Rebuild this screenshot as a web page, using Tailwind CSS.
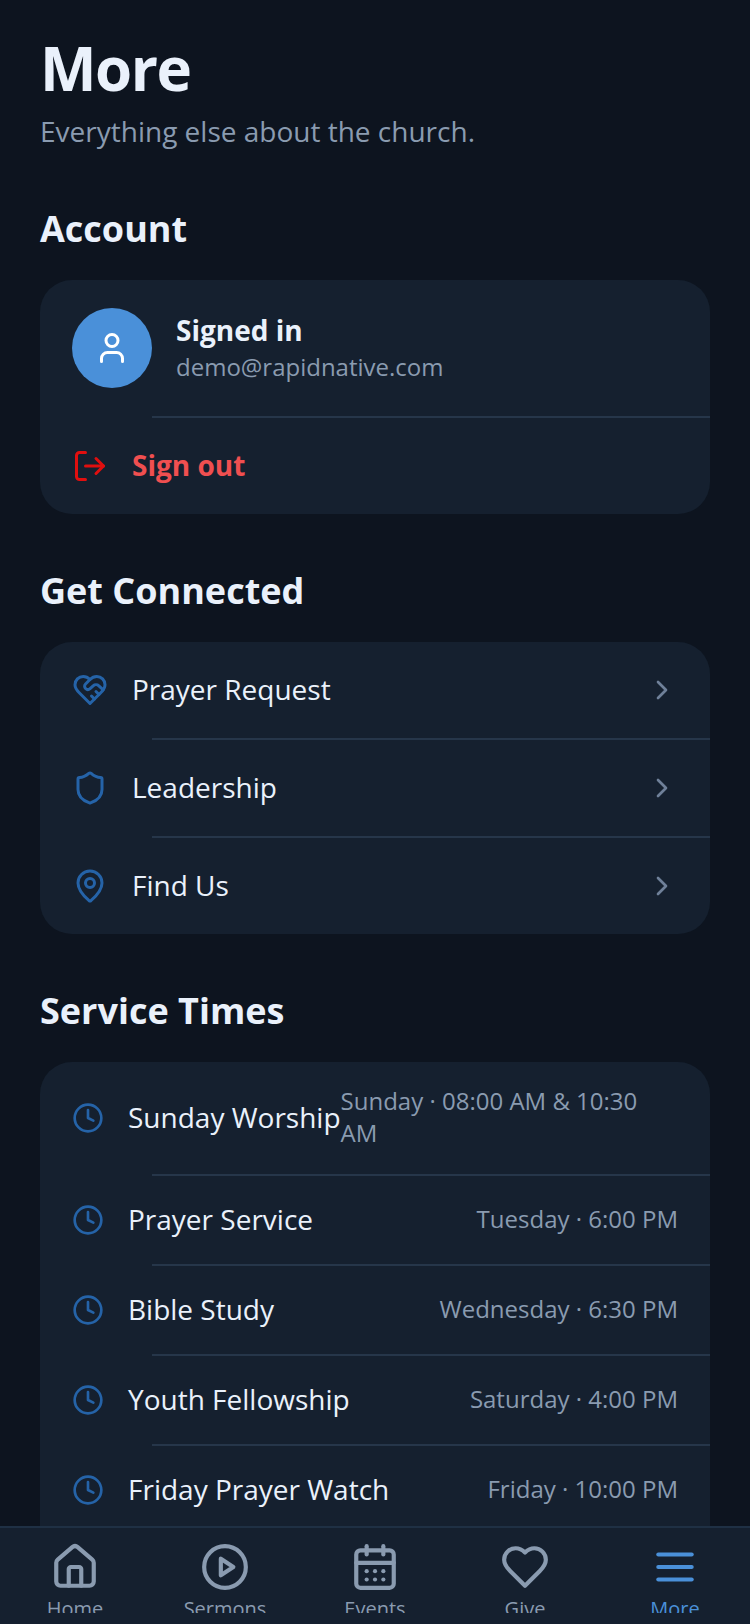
<!DOCTYPE html>
<html lang="en">
<head>
  <meta charset="UTF-8">
  <meta name="viewport" content="width=device-width, initial-scale=1">
  <title>More</title>
  <script src="https://cdn.jsdelivr.net/npm/@tailwindcss/browser@4"></script>
</head>
<body class="bg-[#0d141f] font-['Open_Sans',sans-serif]">
<div class="relative h-[1624px] w-[750px] overflow-hidden">

  <!-- Header -->
  <div class="px-10 pt-[26px]">
    <h1 class="text-[60px] leading-[84px] font-bold tracking-[-1.5px] text-[#eaf1fb]">More</h1>
    <p class="mt-[2px] text-[28px] leading-[38px] text-[#8a9bb0]">Everything else about the church.</p>
  </div>

  <!-- Account -->
  <section class="px-10 mt-[55px]">
    <h2 class="text-[36px] leading-[48px] font-bold text-[#eaf1fb] mb-[27px]">Account</h2>
    <div class="bg-[#15202f] rounded-[32px] overflow-hidden">
      <div class="flex items-center gap-6 px-8 pt-7 pb-7">
        <div class="w-20 h-20 rounded-full bg-[#4a90d9] flex items-center justify-center">
          <svg class="w-9 h-9" viewBox="0 0 24 24" fill="none" stroke="#fff" stroke-width="2" stroke-linecap="round" stroke-linejoin="round"><path d="M19 21v-2a4 4 0 0 0-4-4H9a4 4 0 0 0-4 4v2"/><circle cx="12" cy="7" r="4"/></svg>
        </div>
        <div>
          <div class="text-[28px] leading-[36px] font-bold text-[#eaf1fb]">Signed in</div>
          <div class="text-[24px] leading-[35px] pt-px text-[#8a9bb0]">demo@rapidnative.com</div>
        </div>
      </div>
      <div class="ml-[112px] h-0.5 bg-[#26364a]"></div>
      <div class="flex items-center gap-6 px-8 h-[96px]">
        <svg class="w-9 h-9" viewBox="0 0 24 24" fill="none" stroke="#e00f0f" stroke-width="2" stroke-linecap="round" stroke-linejoin="round"><path d="M9 21H5a2 2 0 0 1-2-2V5a2 2 0 0 1 2-2h4"/><path d="M16 17l5-5-5-5"/><path d="M21 12H9"/></svg>
        <span class="pb-0.5 text-[28px] font-bold text-[#f04f50]">Sign out</span>
      </div>
    </div>
  </section>

  <!-- Get Connected -->
  <section class="px-10 mt-[53px]">
    <h2 class="text-[36px] leading-[48px] font-bold text-[#eaf1fb] mb-[27px]">Get Connected</h2>
    <div class="bg-[#15202f] rounded-[32px] overflow-hidden">
      <div class="flex items-center gap-6 px-8 h-[96px]">
        <svg class="w-9 h-9" viewBox="0 0 24 24" fill="none" stroke="#2563a8" stroke-width="2" stroke-linecap="round" stroke-linejoin="round"><path d="M19 14c1.49-1.46 3-3.21 3-5.5A5.5 5.5 0 0 0 16.5 3c-1.76 0-3 .5-4.5 2-1.5-1.5-2.74-2-4.5-2A5.5 5.5 0 0 0 2 8.5c0 2.3 1.5 4.05 3 5.5l7 7Z"/><path d="M12 5 9.04 7.96a2.17 2.17 0 0 0 0 3.08c.82.82 2.13.85 3 .07l2.07-1.9a2.82 2.82 0 0 1 3.79 0l2.96 2.66"/><path d="m18 15-2-2"/><path d="m15 18-2-2"/></svg>
        <span class="flex-1 pb-0.5 text-[28px] text-[#eaf1fb]">Prayer Request</span>
        <svg class="w-8 h-8" viewBox="0 0 24 24" fill="none" stroke="#6f8099" stroke-width="2" stroke-linecap="round" stroke-linejoin="round"><path d="m9 18 6-6-6-6"/></svg>
      </div>
      <div class="ml-[112px] h-0.5 bg-[#26364a]"></div>
      <div class="flex items-center gap-6 px-8 h-[96px]">
        <svg class="w-9 h-9" viewBox="0 0 24 24" fill="none" stroke="#2563a8" stroke-width="2" stroke-linecap="round" stroke-linejoin="round"><path d="M20 13c0 5-3.5 7.5-7.66 8.95a1 1 0 0 1-.67-.01C7.5 20.5 4 18 4 13V6a1 1 0 0 1 1-1c2 0 4.5-1.2 6.24-2.72a1.17 1.17 0 0 1 1.52 0C14.51 3.81 17 5 19 5a1 1 0 0 1 1 1z"/></svg>
        <span class="flex-1 pb-0.5 text-[28px] text-[#eaf1fb]">Leadership</span>
        <svg class="w-8 h-8" viewBox="0 0 24 24" fill="none" stroke="#6f8099" stroke-width="2" stroke-linecap="round" stroke-linejoin="round"><path d="m9 18 6-6-6-6"/></svg>
      </div>
      <div class="ml-[112px] h-0.5 bg-[#26364a]"></div>
      <div class="flex items-center gap-6 px-8 h-[96px]">
        <svg class="w-9 h-9" viewBox="0 0 24 24" fill="none" stroke="#2563a8" stroke-width="2" stroke-linecap="round" stroke-linejoin="round"><path d="M20 10c0 4.99-5.54 10.19-7.4 11.8a1 1 0 0 1-1.2 0C9.54 20.19 4 14.99 4 10a8 8 0 0 1 16 0"/><circle cx="12" cy="10" r="3"/></svg>
        <span class="flex-1 pb-0.5 text-[28px] text-[#eaf1fb]">Find Us</span>
        <svg class="w-8 h-8" viewBox="0 0 24 24" fill="none" stroke="#6f8099" stroke-width="2" stroke-linecap="round" stroke-linejoin="round"><path d="m9 18 6-6-6-6"/></svg>
      </div>
    </div>
  </section>

  <!-- Service Times -->
  <section class="px-10 mt-[53px]">
    <h2 class="text-[36px] leading-[48px] font-bold text-[#eaf1fb] mb-[27px]">Service Times</h2>
    <!-- card runs on under the tab bar -->
    <div class="bg-[#15202f] rounded-[32px] overflow-hidden pb-10">
      <div class="flex items-center px-8 h-[112px]">
        <svg class="w-8 h-8 mr-6 shrink-0" viewBox="0 0 24 24" fill="none" stroke="#2563a8" stroke-width="2" stroke-linecap="round" stroke-linejoin="round"><circle cx="12" cy="12" r="10"/><path d="M12 6v6l4 2"/></svg>
        <span class="shrink-0 pb-0.5 text-[28px] text-[#eaf1fb]">Sunday Worship</span>
        <span class="flex-1 pb-0.5 text-[24px] leading-[32px] text-[#8a9bb0]">Sunday · 08:00 AM &amp; 10:30 AM</span>
      </div>
      <div class="ml-[112px] h-0.5 bg-[#26364a]"></div>
      <div class="flex items-center justify-between px-8 h-[88px]">
        <div class="flex items-center gap-6">
          <svg class="w-8 h-8" viewBox="0 0 24 24" fill="none" stroke="#2563a8" stroke-width="2" stroke-linecap="round" stroke-linejoin="round"><circle cx="12" cy="12" r="10"/><path d="M12 6v6l4 2"/></svg>
          <span class="pb-0.5 text-[28px] text-[#eaf1fb]">Prayer Service</span>
        </div>
        <span class="pb-0.5 text-[24px] text-[#8a9bb0]">Tuesday · 6:00 PM</span>
      </div>
      <div class="ml-[112px] h-0.5 bg-[#26364a]"></div>
      <div class="flex items-center justify-between px-8 h-[88px]">
        <div class="flex items-center gap-6">
          <svg class="w-8 h-8" viewBox="0 0 24 24" fill="none" stroke="#2563a8" stroke-width="2" stroke-linecap="round" stroke-linejoin="round"><circle cx="12" cy="12" r="10"/><path d="M12 6v6l4 2"/></svg>
          <span class="pb-0.5 text-[28px] text-[#eaf1fb]">Bible Study</span>
        </div>
        <span class="pb-0.5 text-[24px] text-[#8a9bb0]">Wednesday · 6:30 PM</span>
      </div>
      <div class="ml-[112px] h-0.5 bg-[#26364a]"></div>
      <div class="flex items-center justify-between px-8 h-[88px]">
        <div class="flex items-center gap-6">
          <svg class="w-8 h-8" viewBox="0 0 24 24" fill="none" stroke="#2563a8" stroke-width="2" stroke-linecap="round" stroke-linejoin="round"><circle cx="12" cy="12" r="10"/><path d="M12 6v6l4 2"/></svg>
          <span class="pb-0.5 text-[28px] text-[#eaf1fb]">Youth Fellowship</span>
        </div>
        <span class="pb-0.5 text-[24px] text-[#8a9bb0]">Saturday · 4:00 PM</span>
      </div>
      <div class="ml-[112px] h-0.5 bg-[#26364a]"></div>
      <div class="flex items-center justify-between px-8 h-[88px]">
        <div class="flex items-center gap-6">
          <svg class="w-8 h-8" viewBox="0 0 24 24" fill="none" stroke="#2563a8" stroke-width="2" stroke-linecap="round" stroke-linejoin="round"><circle cx="12" cy="12" r="10"/><path d="M12 6v6l4 2"/></svg>
          <span class="pb-0.5 text-[28px] text-[#eaf1fb]">Friday Prayer Watch</span>
        </div>
        <span class="pb-0.5 text-[24px] text-[#8a9bb0]">Friday · 10:00 PM</span>
      </div>
    </div>
  </section>

  <!-- Tab bar: labels are cut off by the item height, same as the screenshot -->
  <nav class="absolute bottom-0 left-0 right-0 h-[98px] bg-[#15202f] border-t-2 border-[#1f3044] flex">
    <div class="w-[150px] h-[85px] overflow-hidden flex flex-col items-center pt-[14px]">
      <svg class="w-[50px] h-[50px] shrink-0" viewBox="0 0 24 24" fill="none" stroke="#8a9bb0" stroke-width="2" stroke-linecap="round" stroke-linejoin="round"><path d="M15 21v-8a1 1 0 0 0-1-1h-4a1 1 0 0 0-1 1v8"/><path d="M3 10a2 2 0 0 1 .709-1.528l7-5.999a2 2 0 0 1 2.582 0l7 5.999A2 2 0 0 1 21 10v9a2 2 0 0 1-2 2H5a2 2 0 0 1-2-2z"/></svg>
      <span class="text-[20px] leading-[28px] text-[#8a9bb0] mt-[3px]">Home</span>
    </div>
    <div class="w-[150px] h-[85px] overflow-hidden flex flex-col items-center pt-[14px]">
      <svg class="w-[50px] h-[50px] shrink-0" viewBox="0 0 24 24" fill="none" stroke="#8a9bb0" stroke-width="2" stroke-linecap="round" stroke-linejoin="round"><circle cx="12" cy="12" r="10"/><path d="m10 8 6 4-6 4z"/></svg>
      <span class="text-[20px] leading-[28px] text-[#8a9bb0] mt-[3px]">Sermons</span>
    </div>
    <div class="w-[150px] h-[85px] overflow-hidden flex flex-col items-center pt-[14px]">
      <svg class="w-[50px] h-[50px] shrink-0" viewBox="0 0 24 24" fill="none" stroke="#8a9bb0" stroke-width="2" stroke-linecap="round" stroke-linejoin="round"><path d="M8 2v4"/><path d="M16 2v4"/><rect x="3" y="4" width="18" height="18" rx="2"/><path d="M3 10h18"/><path d="M8 14h.01"/><path d="M12 14h.01"/><path d="M16 14h.01"/><path d="M8 18h.01"/><path d="M12 18h.01"/><path d="M16 18h.01"/></svg>
      <span class="text-[20px] leading-[28px] text-[#8a9bb0] mt-[3px]">Events</span>
    </div>
    <div class="w-[150px] h-[85px] overflow-hidden flex flex-col items-center pt-[14px]">
      <svg class="w-[50px] h-[50px] shrink-0" viewBox="0 0 24 24" fill="none" stroke="#8a9bb0" stroke-width="2" stroke-linecap="round" stroke-linejoin="round"><path d="M19 14c1.49-1.46 3-3.21 3-5.5A5.5 5.5 0 0 0 16.5 3c-1.76 0-3 .5-4.5 2-1.5-1.5-2.74-2-4.5-2A5.5 5.5 0 0 0 2 8.5c0 2.3 1.5 4.05 3 5.5l7 7Z"/></svg>
      <span class="text-[20px] leading-[28px] text-[#8a9bb0] mt-[3px]">Give</span>
    </div>
    <div class="w-[150px] h-[85px] overflow-hidden flex flex-col items-center pt-[14px]">
      <svg class="w-[50px] h-[50px] shrink-0" viewBox="0 0 24 24" fill="none" stroke="#4a90d9" stroke-width="2" stroke-linecap="round" stroke-linejoin="round"><path d="M4 6h16"/><path d="M4 12h16"/><path d="M4 18h16"/></svg>
      <span class="text-[20px] leading-[28px] text-[#4a90d9] mt-[3px]">More</span>
    </div>
  </nav>
</div>
</body>
</html>
